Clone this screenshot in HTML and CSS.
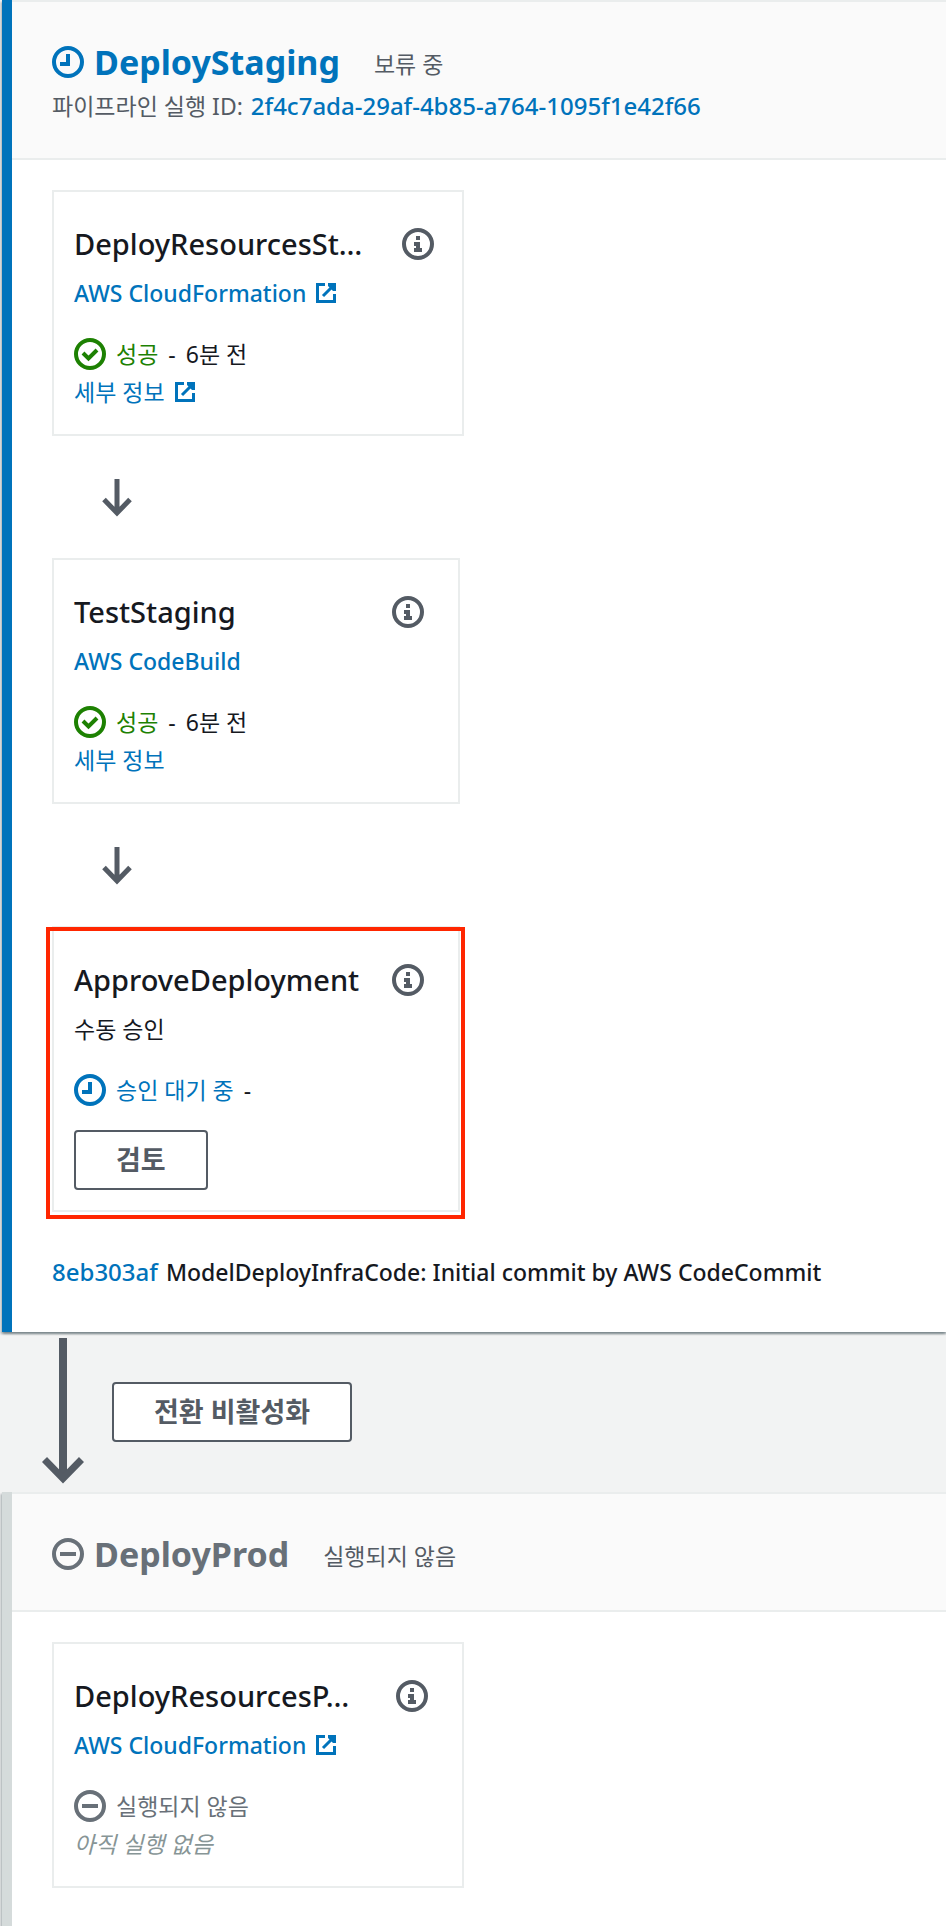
FILE: index.html
```html
<!DOCTYPE html>
<html lang="ko">
<head>
<meta charset="utf-8">
<title>DeployStaging</title>
<meta name="viewport" content="width=device-width, initial-scale=1">
<link rel="stylesheet" href="styles.css">
</head>
<body>
<svg class="sprite" aria-hidden="true">
  <symbol id="i-clock" viewBox="0 0 32 32"><circle cx="16" cy="16" r="14" fill="none" stroke="currentColor" stroke-width="4"/><path d="M16 8v10H8" fill="none" stroke="currentColor" stroke-width="4"/></symbol>
  <symbol id="i-check" viewBox="0 0 32 32"><circle cx="16" cy="16" r="14" fill="none" stroke="currentColor" stroke-width="4"/><path d="M9 15l5.500 5.500L23 12" fill="none" stroke="currentColor" stroke-width="4"/></symbol>
  <symbol id="i-minus" viewBox="0 0 32 32"><circle cx="16" cy="16" r="14" fill="none" stroke="currentColor" stroke-width="4"/><path d="M8 16h16" fill="none" stroke="currentColor" stroke-width="4"/></symbol>
  <symbol id="i-info" viewBox="0 0 32 32"><circle cx="16" cy="16" r="14" fill="none" stroke="currentColor" stroke-width="4"/><path d="M14 8h4v4h-4zM12 14h6v6h2v4h-8v-4h2v-2h-2z" fill="currentColor"/></symbol>
  <symbol id="i-ext" viewBox="0 0 20 20"><path d="M9 1.500H1.500v17h17V11M7 13L18 2" fill="none" stroke="currentColor" stroke-width="3"/><path d="M12 0h8v8h-3l-5-5z" fill="currentColor"/></symbol>
  <symbol id="i-down" viewBox="0 0 30 38"><path d="M15 0v34M2 20.500l13 13.500 13-13.500" fill="none" stroke="currentColor" stroke-width="5"/></symbol>
</svg>

<main class="pipeline">
  <section class="stage stage--progress">
    <header class="stage-header">
      <div class="stage-heading">
        <svg class="icon"><use href="#i-clock"/></svg>
        <h2 class="stage-title">DeployStaging</h2>
        <span class="stage-status">보류 중</span>
      </div>
      <p class="stage-meta"><span>파이프라인 실행 ID:</span><a class="link hash" href="#execution">2f4c7ada-29af-4b85-a764-1095f1e42f66</a></p>
    </header>
    <div class="stage-body">
      <article class="card card--wide card--tight">
        <div class="card-head">
          <h3 class="card-title">DeployResourcesSt…</h3>
          <button class="info" type="button" aria-label="정보"><svg class="icon"><use href="#i-info"/></svg></button>
        </div>
        <p class="card-service"><a class="link latin" href="#cloudformation">AWS CloudFormation<svg class="ext"><use href="#i-ext"/></svg></a></p>
        <p class="card-status"><svg class="icon success"><use href="#i-check"/></svg><span class="success">성공</span><span>-</span><span>6분 전</span></p>
        <p class="card-detail"><a class="link" href="#details-1">세부 정보<svg class="ext"><use href="#i-ext"/></svg></a></p>
      </article>
      <div class="step-arrow"><svg><use href="#i-down"/></svg></div>
      <article class="card">
        <div class="card-head">
          <h3 class="card-title">TestStaging</h3>
          <button class="info" type="button" aria-label="정보"><svg class="icon"><use href="#i-info"/></svg></button>
        </div>
        <p class="card-service"><a class="link latin" href="#codebuild">AWS CodeBuild</a></p>
        <p class="card-status"><svg class="icon success"><use href="#i-check"/></svg><span class="success">성공</span><span>-</span><span>6분 전</span></p>
        <p class="card-detail"><a class="link" href="#details-2">세부 정보</a></p>
      </article>
      <div class="step-arrow"><svg><use href="#i-down"/></svg></div>
      <article class="card card--marked">
        <div class="card-head">
          <h3 class="card-title">ApproveDeployment</h3>
          <button class="info" type="button" aria-label="정보"><svg class="icon"><use href="#i-info"/></svg></button>
        </div>
        <p class="card-service">수동 승인</p>
        <p class="card-status"><svg class="icon pending"><use href="#i-clock"/></svg><span class="pending">승인 대기 중</span><span>-</span></p>
        <button class="button button--review" type="button">검토</button>
      </article>
      <p class="commit"><a class="link hash" href="#commit">8eb303af</a><span class="latin">ModelDeployInfraCode: Initial commit by AWS CodeCommit</span></p>
    </div>
  </section>

  <div class="transition">
    <svg class="transition-arrow" viewBox="0 0 42 146"><path d="M21 0v141" fill="none" stroke="currentColor" stroke-width="8"/><path d="M2.500 121.500L21 140.500l18.500-19" fill="none" stroke="currentColor" stroke-width="7"/></svg>
    <button class="button" type="button">전환 비활성화</button>
  </div>

  <section class="stage stage--idle">
    <header class="stage-header">
      <div class="stage-heading">
        <svg class="icon"><use href="#i-minus"/></svg>
        <h2 class="stage-title">DeployProd</h2>
        <span class="stage-status">실행되지 않음</span>
      </div>
    </header>
    <div class="stage-body">
      <article class="card card--wide">
        <div class="card-head">
          <h3 class="card-title">DeployResourcesP…</h3>
          <button class="info" type="button" aria-label="정보"><svg class="icon"><use href="#i-info"/></svg></button>
        </div>
        <p class="card-service"><a class="link latin" href="#cloudformation-prod">AWS CloudFormation<svg class="ext"><use href="#i-ext"/></svg></a></p>
        <p class="card-status idle"><svg class="icon"><use href="#i-minus"/></svg><span>실행되지 않음</span></p>
        <p class="card-detail never">아직 실행 없음</p>
      </article>
    </div>
  </section>
</main>
</body>
</html>
```

FILE: styles.css
```css
* { box-sizing: border-box; }

body {
  margin: 0;
  background: #f2f3f3;
  color: #16191f;
  font-family: "Noto Sans", "Noto Sans CJK KR", sans-serif;
  font-size: 23px;
  line-height: 32px;
}

h2, h3, p { margin: 0; }

.sprite { position: absolute; width: 0; height: 0; }

.pipeline {
  display: flex;
  flex-direction: column;
  min-height: 100vh;
  padding-left: 2px;
}

.link { color: #0073bb; text-decoration: none; }
.link:hover { text-decoration: underline; }
.latin { font-weight: 500; }
.hash { font-size: 24px; font-weight: 500; }

.icon { display: block; flex: none; width: 32px; height: 32px; }
.ext { width: 20px; height: 20px; margin-left: 10px; vertical-align: -1px; }

.success { color: #1d8102; }
.pending { color: #0073bb; }
.idle { color: #687078; }

.stage {
  border-left: 10px solid;
  background: #fff;
  box-shadow:
    0 2px 2px rgba(0, 28, 36, 0.3),
    2px 2px 2px rgba(0, 28, 36, 0.15),
    -2px 2px 2px rgba(0, 28, 36, 0.15);
}
.stage--progress { border-left-color: #0073bb; }
.stage--idle { flex: 1; border-left-color: #d5dbdb; }

.stage-header {
  padding: 40px 40px 36px;
  background: #fafafa;
  border-top: 2px solid #eaeded;
  border-bottom: 2px solid #eaeded;
}
.stage-heading { display: flex; align-items: center; gap: 10px; height: 40px; color: #0073bb; }
.stage--idle .stage-heading { color: #687078; }
.stage-title { font-size: 34px; line-height: 40px; font-weight: 700; }
.stage-status { padding: 4px 0 0 24px; color: #545b64; }
.stage-meta { display: flex; flex-wrap: wrap; gap: 8px; margin-top: 8px; color: #545b64; }

.stage-body { padding: 30px 40px 38px; }

.card {
  position: relative;
  width: 408px;
  max-width: 100%;
  padding: 26px 34px 20px 20px;
  border: 2px solid #eaeded;
  background: #fff;
}
.card--wide { width: 412px; }
.card--tight { padding-right: 28px; }

/* Highlight frame around the action that needs attention */
.card--marked::after {
  content: "";
  position: absolute;
  inset: -1px -7px -9px -8px;
  border: 4px solid #ff2600;
  pointer-events: none;
}

.card-head { display: flex; align-items: center; justify-content: space-between; height: 52px; }
.card-title { font-size: 29px; line-height: 40px; font-weight: 500; white-space: nowrap; }
.info { padding: 0; border: 0; background: none; color: #545b64; cursor: pointer; }
.card-service { padding: 7px 0 29px; }
.card-status { display: flex; align-items: center; gap: 10px; }
.card-detail { padding: 6px 0; }
.never { color: #879596; font-style: italic; }

.step-arrow { display: flex; align-items: center; height: 122px; padding: 2px 0 0 50px; color: #545b64; }
.step-arrow svg { width: 30px; height: 38px; }

.button {
  height: 60px;
  padding: 0 40px;
  border: 2px solid #545b64;
  border-radius: 4px;
  background: #fff;
  color: #545b64;
  font: 700 27px/36px "Noto Sans", "Noto Sans CJK KR", sans-serif;
  cursor: pointer;
}
.button--review { display: block; margin-top: 24px; }

.commit { display: flex; flex-wrap: wrap; gap: 8px; margin: 44px 0 6px; }

.transition { display: flex; align-items: center; gap: 28px; height: 160px; padding: 0 0 2px 40px; color: #545b64; }
.transition-arrow { width: 42px; height: 146px; }
.transition .button { margin-top: 2px; }
```
